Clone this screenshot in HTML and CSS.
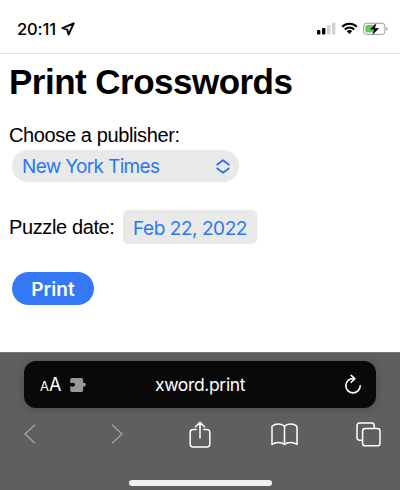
FILE: index.html
```html
<!DOCTYPE html>
<html lang="en">
<head>
<meta charset="utf-8">
<title>Print Crosswords</title>
<link rel="stylesheet" href="styles.css">
</head>
<body>
<div class="phone">
  <header class="status">
    <span class="time">20:11</span>
    <svg class="location" width="14" height="14" viewBox="0 0 14 14"><path d="M12.7 1.3 1.4 6.1 6.2 7.6 7.6 12.6Z" fill="none" stroke="#000" stroke-width="1.9" stroke-linejoin="round"/></svg>
    <svg class="signal" width="19" height="13" viewBox="0 0 19 13"><rect x="0" y="8" width="3.4" height="4.5" rx="1"/><rect x="5" y="6" width="3.4" height="6.5" rx="1"/><g fill="#d2d2d2"><rect x="10" y="3" width="3.4" height="9.5" rx="1"/><rect x="15" y="0.5" width="3.4" height="12" rx="1"/></g></svg>
    <svg class="wifi" width="17" height="13" viewBox="0 0 17 13"><path d="M1.2 4.7a10.6 10.6 0 0 1 14.6 0M3.8 7.4a6.8 6.8 0 0 1 9.4 0" fill="none" stroke="#000" stroke-width="2.1"/><path d="M5.8 9.3a4 4 0 0 1 5.4 0L8.5 12.1Z"/></svg>
    <svg class="battery" width="25" height="14" viewBox="0 0 25 14"><rect x=".6" y="1.2" width="21.3" height="11.2" rx="3" fill="#fff" stroke="#9a9a9a"/><path d="M4 3h7v7.6H4a1.7 1.7 0 0 1-1.7-1.7V4.7A1.7 1.7 0 0 1 4 3Z" fill="#5ccb65"/><path d="M23.2 5v3.6q1.5-.7 1.5-1.8t-1.5-1.8Z" fill="#999"/><path d="M13.7.4 6.6 7.7H10.8L9.1 13.6 16.3 6.1H12.1Z" stroke="#fff" stroke-width=".3"/></svg>
  </header>
  <main class="page">
    <h1>Print Crosswords</h1>
    <label class="label">Choose a publisher:</label>
    <div class="select"><span class="select-value">New York Times</span><svg width="14" height="15" viewBox="0 0 14 15"><path d="m1.3 5.6 5.7-4.3 5.7 4.3M1.3 9.4 7 13.7l5.7-4.3" fill="none" stroke="#2878f5" stroke-width="1.9" stroke-linecap="round" stroke-linejoin="round"/></svg></div>
    <div class="date-row"><label class="label date-label">Puzzle date:</label><span class="date">Feb 22, 2022</span></div>
    <button class="print">Print</button>
  </main>
  <footer class="browser">
    <div class="address">
      <span class="text-size"><span class="small-a">A</span>A</span>
      <svg class="puzzle" width="17" height="14" viewBox="0 0 17 14"><path d="M2 0H11.3a1.8 1.8 0 0 1 1.8 1.8V4.8h.8a1.9 1.9 0 1 1 0 3.8h-.8v3.6a1.8 1.8 0 0 1-1.8 1.8H2A1.8 1.8 0 0 1 .2 12.2V8.4H2a2 2 0 1 0 0-3.4H.2V1.8A1.8 1.8 0 0 1 2 0Z" fill="#99979c"/></svg>
      <span class="url">xword.print</span>
      <svg class="reload" width="18" height="21" viewBox="0 0 18 21"><path d="M9.5 4.5A7.2 7.2 0 1 0 16.2 11.7M7.2 1.4l3.6 3.2-3.6 3.7" fill="none" stroke="#fff" stroke-width="1.6" stroke-linecap="round" stroke-linejoin="round"/></svg>
    </div>
    <nav class="toolbar">
      <svg class="back" width="12" height="20" viewBox="0 0 12 20"><path d="M11 .8 1 10l10 9.2" fill="none" stroke="#a2a2a2" stroke-width="1.4"/></svg>
      <svg class="forward" width="12" height="20" viewBox="0 0 12 20"><path d="m1 .8 10 9.2L1 19.2" fill="none" stroke="#a2a2a2" stroke-width="1.4"/></svg>
      <svg class="share" width="22" height="27" viewBox="0 0 22 27"><path d="M7.2 8.5H4A2.8 2.8 0 0 0 1.2 11.3v12A2.8 2.8 0 0 0 4 26h14a2.8 2.8 0 0 0 2.8-2.7v-12A2.8 2.8 0 0 0 18 8.5h-3.2M11 17V1.5M6.5 5.7 11 1.3l4.5 4.4" fill="none" stroke="#fff" stroke-width="1.5" stroke-linecap="round" stroke-linejoin="round"/></svg>
      <svg class="book" width="27" height="23" viewBox="0 0 27 23"><path d="M13.5 3.3v18.2M13.5 3.3C11 .2 4.5.2 1 3.2v18.3c3.5-2.8 9.5-2.8 12.5 0 3-2.8 9-2.8 12.5 0V3.2c-3.5-3-10-3-12.5.1Z" fill="none" stroke="#fff" stroke-width="1.5" stroke-linejoin="round"/></svg>
      <svg class="tabs" width="25" height="25" viewBox="0 0 25 25"><path d="M6.6 18.2H3.6A2.6 2.6 0 0 1 1 15.6V3.6A2.6 2.6 0 0 1 3.6 1h12a2.6 2.6 0 0 1 2.6 2.6v2.5" fill="none" stroke="#fff" stroke-width="1.5"/><rect x="6.6" y="6.4" width="17.4" height="17.4" rx="2.6" fill="none" stroke="#fff" stroke-width="1.5"/></svg>
    </nav>
    <div class="home"></div>
  </footer>
</div>
</body>
</html>
```
FILE: styles.css
```css
* { box-sizing: border-box; }
body { margin: 0; background: #fff; color: #000; font-family: "Liberation Sans", Arial, sans-serif; }
svg { display: block; flex: none; }
.phone { width: 400px; height: 490px; display: flex; flex-direction: column; overflow: hidden; }
.status { height: 54px; flex: none; display: flex; align-items: center; padding: 4px 12px 0 17px; border-bottom: 1px solid #e2e2e2; }
.time { width: 40px; font: 500 16.5px/20px Inter, sans-serif; letter-spacing: -.1px; white-space: nowrap; }
.location { margin-left: 4px; }
.signal { margin-left: auto; }
.wifi { margin-left: 5px; }
.battery { margin-left: 5px; }
.page { flex: 1; padding: 8px 9px 0; display: flex; flex-direction: column; align-items: flex-start; }
h1 { margin: 0; font-size: 35px; line-height: 40px; letter-spacing: -.52px; white-space: nowrap; }
.label { font-size: 20px; line-height: 24px; letter-spacing: -.38px; margin-top: 21px; white-space: nowrap; }
.select { width: 227px; height: 32px; margin: 3px 0 0 3px; padding: 0 9px 0 10px; border-radius: 16px; background: #e9e9e9; color: #2878f5; display: flex; align-items: center; justify-content: space-between; font: 19px/24px Inter, sans-serif; letter-spacing: -.66px; white-space: nowrap; }
.select-value { padding-top: 2px; }
.date-row { display: flex; align-items: center; margin-top: 28px; }
.date-label { margin: 0; width: 114px; }
.date { width: 134px; height: 34px; border-radius: 5px; background: #e9e9e9; color: #2878f5; text-align: center; font: 19px/37px Inter, sans-serif; letter-spacing: -.45px; white-space: nowrap; }
.print { width: 82px; height: 33px; margin: 28px 0 0 3px; padding: 2px 0 0; border: 0; border-radius: 17px; background: #3478f6; color: #fff; font: 600 19px/31px Inter, sans-serif; }
.browser { height: 138px; flex: none; background: #5f5f5f; border-top: 1px solid #777; padding: 8px 24px 0; }
.address { width: 352px; height: 47px; border-radius: 12px; background: #090909; color: #fff; display: flex; align-items: center; padding: 0 14px 0 16px; box-shadow: 0 1px 8px #0003; font: 17.5px/24px Inter, sans-serif; }
.text-size { width: 22px; font-size: 18px; white-space: nowrap; padding-top: 2px; }
.small-a { font-size: 13px; }
.puzzle { margin-left: 8px; }
.url { margin-left: 68px; letter-spacing: -.35px; white-space: nowrap; }
.reload { margin-left: auto; }
.toolbar { height: 52px; display: flex; align-items: center; margin-right: -5px; }
.forward { margin-left: 75px; }
.share { margin-left: 66px; }
.book { margin-left: 60px; }
.tabs { margin-left: auto; }
.home { width: 143px; height: 6px; margin: 20px auto 0; border-radius: 3px; background: #f2f2f2; }
```
